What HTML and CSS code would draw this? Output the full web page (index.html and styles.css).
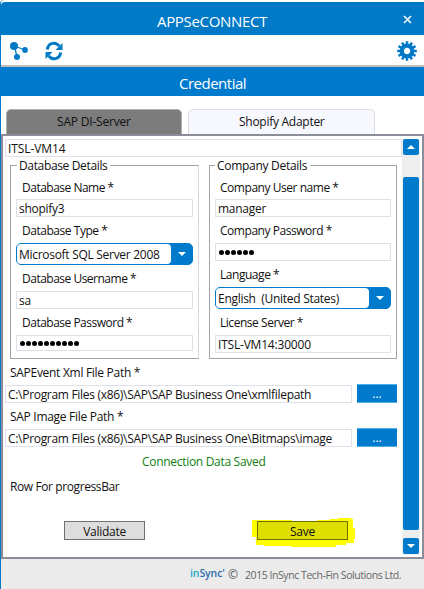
FILE: index.html
```html
<!DOCTYPE html>
<html lang="en">
<head>
<meta charset="utf-8">
<title>APPSeCONNECT</title>
<link rel="stylesheet" href="styles.css">
</head>
<body>
<div class="window">
  <header class="titlebar">
    <h1>APPSeCONNECT</h1>
    <svg class="close" width="9" height="9" viewBox="0 0 9 9"><path d="M1 1L8 8M8 1L1 8" stroke="#fff" stroke-width="1.5"/></svg>
  </header>
  <nav class="toolbar">
    <svg class="nodes" width="20" height="20" viewBox="0 0 20 20"><path d="M5.5 5L16 9M5.5 5L8 16" stroke="#0079c6" stroke-width="1.3"/><g fill="#0079c6"><circle cx="5" cy="5" r="4"/><circle cx="16" cy="9" r="2.9"/><circle cx="8" cy="16" r="3"/></g></svg>
    <svg class="sync" width="18" height="20" viewBox="0 0 18 20"><g fill="none" stroke="#0079c6" stroke-width="3"><path d="M2.300 8.500C3.500 1.200 11 .6 14.200 5.200"/><path d="M15.700 11.500C14.500 18.800 7 19.400 3.800 14.800"/></g><path d="M17.500 2v7H10.500zM.5 18v-7h7z" fill="#0079c6"/></svg>
    <svg class="gear" width="20" height="20" viewBox="-10 -10 20 20"><circle r="5.300" fill="none" stroke="#0079c6" stroke-width="4.200"/><g stroke="#0079c6" stroke-width="2.500"><path d="M0-9.800V-6M0 9.800V6M-9.800 0H-6M9.800 0H6"/><path d="M0-9.800V-6M0 9.800V6M-9.800 0H-6M9.800 0H6" transform="rotate(30)"/><path d="M0-9.800V-6M0 9.800V6M-9.800 0H-6M9.800 0H6" transform="rotate(60)"/></g></svg>
  </nav>
  <h2 class="heading">Credential</h2>
  <div class="tabs">
    <div class="tab active s20">SAP DI-Server</div>
    <div class="tab s25">Shopify Adapter</div>
  </div>
  <main class="panel">
    <div class="content">
      <div class="input server s0">ITSL-VM14</div>
      <div class="groups">
        <section class="group database">
          <div class="legend s35">Database Details</div>
          <div class="label s55">Database Name *</div>
          <div class="input s25">shopify3</div>
          <div class="label s45">Database Type *</div>
          <div class="combo"><span class="s28">Microsoft SQL Server 2008</span><i class="arrow down"></i></div>
          <div class="label s55">Database Username *</div>
          <div class="input s25">sa</div>
          <div class="label s55">Database Password *</div>
          <div class="input dots short"><i></i><i></i><i></i><i></i><i></i><i></i><i></i><i></i><i></i><i></i></div>
        </section>
        <section class="group company">
          <div class="legend s28">Company Details</div>
          <div class="label s45">Company User name *</div>
          <div class="input s25">manager</div>
          <div class="label s45">Company Password *</div>
          <div class="input dots"><i></i><i></i><i></i><i></i><i></i><i></i></div>
          <div class="label s45">Language *</div>
          <div class="combo"><span class="s28">English &nbsp;(United States)</span><i class="arrow down"></i></div>
          <div class="label s45">License Server *</div>
          <div class="input s20">ITSL-VM14:30000</div>
        </section>
      </div>
      <div class="path-label s28">SAPEvent Xml File Path *</div>
      <div class="path-row"><div class="input s30">C:\Program Files (x86)\SAP\SAP Business One\xmlfilepath</div><div class="browse">...</div></div>
      <div class="path-label s28">SAP Image File Path *</div>
      <div class="path-row"><div class="input s30">C:\Program Files (x86)\SAP\SAP Business One\Bitmaps\image</div><div class="browse">...</div></div>
      <div class="status s30">Connection Data Saved</div>
      <div class="progress s40">Row For progressBar</div>
      <div class="actions">
        <div class="button validate s25">Validate</div>
        <div class="save-wrap">
          <svg class="marker" width="104" height="30" viewBox="0 0 104 30"><path d="M0 2H40V3H65V2H78V1H86V0H99V1H101V10H103V21H102V25H94V27H84V29H39V28H12V27H4V19H0z" fill="#ff0"/></svg>
          <div class="button save s25">Save</div>
        </div>
      </div>
    </div>
    <div class="scrollbar">
      <div class="step"><i class="arrow up"></i></div>
      <div class="thumb"></div>
      <div class="step"><i class="arrow down"></i></div>
    </div>
  </main>
  <footer class="footer">
    <span class="logo"><span class="in">in</span>Sync<span class="tm">'</span></span>
    <span class="copy">©</span>
    <span class="legal">2015 InSync Tech-Fin Solutions Ltd.</span>
  </footer>
</div>
</body>
</html>
```
FILE: styles.css
```css
* { box-sizing: border-box; }
body { margin: 0; background: #fff; font: 12px/18px "Open Sans", "Noto Sans", sans-serif; color: #111; overflow: hidden; }
h1, h2 { margin: 0; font-weight: 400; font-size: 15px; color: #fff; }
svg { display: block; flex: none; }
.s0 { letter-spacing: -.08px; }
.s20 { letter-spacing: -.2px; }
.s25 { letter-spacing: -.27px; }
.s28 { letter-spacing: -.29px; }
.s30 { letter-spacing: -.3px; }
.s35 { letter-spacing: -.35px; }
.s40 { letter-spacing: -.4px; }
.s45 { letter-spacing: -.46px; }
.s55 { letter-spacing: -.5px; }

.window { width: 424px; height: 589px; padding-top: 2px; border-left: 1px solid #0079c6; border-top-left-radius: 4px; display: flex; flex-direction: column; white-space: nowrap; }
.titlebar { height: 33px; background: #0079c6; display: flex; align-items: center; padding: 4px 12px 0 156px; justify-content: space-between; border-top-left-radius: 4px; }
.titlebar h1 { letter-spacing: -.32px; }
.close { margin-top: -3px; }
.toolbar { height: 32px; border-bottom: 2px solid #bebebe; display: flex; align-items: center; padding: 1px 7px 0 8px; }
.sync { margin-left: 16px; }
.gear { margin-left: auto; }
.heading { height: 29px; background: #007acd; padding-left: 178px; line-height: 33px; letter-spacing: -.5px; }
.tabs { height: 38px; padding: 13px 0 0 5px; display: flex; gap: 6px; }
.tab { width: 176px; height: 25px; line-height: 24px; background: #7c7c7c; border: 1px solid #dcdde4; border-bottom: 0; border-radius: 5px 5px 0 0; padding-left: 50px; }
.tab:not(.active) { background: #f7f8fe; width: 187px; }
.tab.active { border-color: #b0b0b0; }

.panel { height: 425px; border: 2px solid #8b8d98; display: flex; padding: 3px 2px 2px 0; }
.content { width: 397px; padding-left: 2px; flex: none; }
.input { height: 18px; border: 1px solid #dfe0ea; padding: 0 0 0 2px; line-height: 18px; background: #fff; }
.server { width: 397px; }
.groups { display: flex; gap: 10px; padding: 8px 0 0 5px; }
.group { height: 194px; border: 1px solid #a3a3a3; padding: 0 5px; }
.database { width: 189px; border-right-color: #d9d9d9; }
.company { width: 188px; }
.legend { width: max-content; height: 18px; line-height: 18px; margin-top: -9px; padding: 0 3px 0 2px; background: #fff; }
.database .legend { margin-left: 1px; }
.label { height: 26px; line-height: 27px; padding-left: 6px; }
.company .label { padding-left: 5px; }
.legend + .label { height: 24px; line-height: 25px; }
.database .input, .database .combo { width: 177px; }
.short { height: 16px; }
.combo { height: 22px; border: 1px solid #007acd; border-radius: 5px; background: #007acd; display: flex; }
.combo span { flex: 1; background: #fff; border-radius: 4px; line-height: 21px; padding-left: 2px; }
.combo .arrow { margin: 8px 6px 0 7px; }
.arrow { width: 0; height: 0; border: 4px solid transparent; flex: none; }
.down { border-top-color: #fff; border-bottom: 0; }
.up { border-bottom-color: #fff; border-top: 0; }
.dots { display: flex; align-items: center; gap: 1px; padding: 1px 0 0 3px; }
.dots i { width: 5px; height: 5px; background: #000; border-radius: 50%; }
.path-label { height: 26px; line-height: 27px; padding-left: 5px; }
.path-row { display: flex; justify-content: space-between; height: 18px; padding-right: 3px; }
.path-row .input { width: 347px; }
.browse { width: 40px; height: 19px; margin-top: -1px; background: #007acd; border-top: 1px solid #4fb0e8; border-bottom: 1px solid #4fb0e8; color: #fff; text-align: center; line-height: 17px; }
.status { color: #118011; padding-left: 137px; height: 28px; line-height: 29px; }
.progress { padding-left: 5px; height: 46px; line-height: 23px; }
.actions { display: flex; padding-left: 59px; }
.button { height: 19px; border: 1px solid #707070; background: #ddd; line-height: 20px; text-align: center; }
.validate { width: 81px; }
.save-wrap { margin-left: 112px; width: 91px; position: relative; }
.marker { position: absolute; left: -5px; top: -3px; }
.save { position: relative; background: #dede00; border-color: #707000; }

.scrollbar { width: 18px; background: #eee; display: flex; flex-direction: column; align-items: center; margin-left: auto; }
.step { width: 16px; height: 16px; background: #007acd; border-radius: 2px; display: flex; align-items: center; justify-content: center; }
.thumb { width: 16px; height: 353px; margin: 22px 0 8px; background: #007acd; border-radius: 2px; }

.footer { height: 30px; background: #ebebeb; display: flex; align-items: center; color: #666; font-size: 10.5px; padding: 2px 0 0 189px; }
.logo { width: 38px; font-size: 10.5px; font-weight: 600; letter-spacing: -.1px; color: #2f6db0; padding-bottom: 4px; }
.in { color: #20a8cc; }
.copy { width: 17px; font-size: 12px; color: #555; }
.legal { letter-spacing: -.44px; }
```
